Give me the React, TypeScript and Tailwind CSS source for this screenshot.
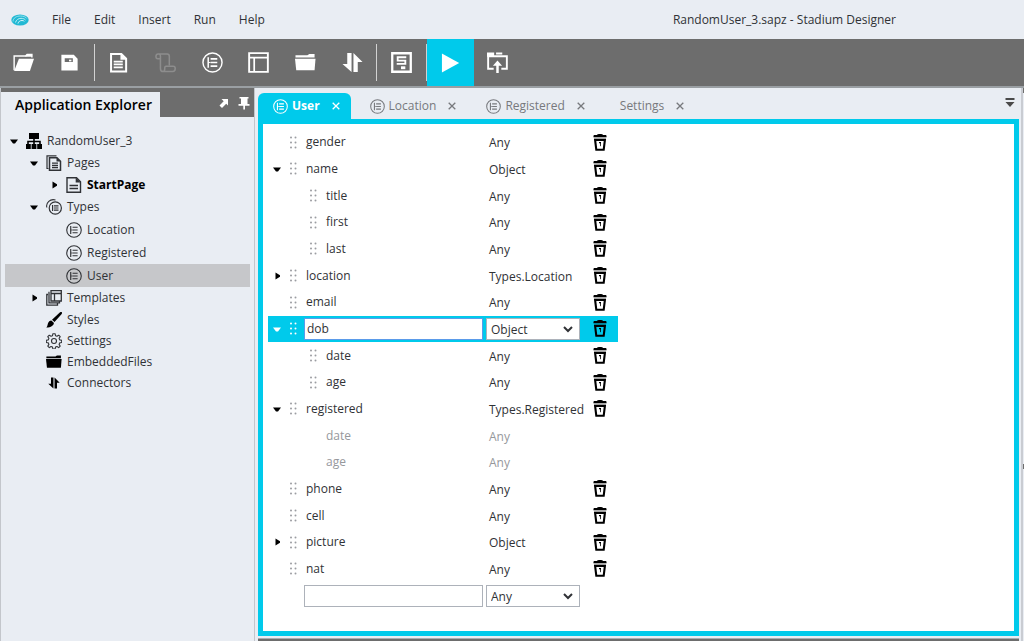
import type { ReactNode } from "react";

type IconProps = { className?: string };

function Svg({ className, box = 22, children }: { className?: string; box?: number; children: ReactNode }) {
  return (
    <svg viewBox={`0 0 ${box} ${box}`} className={className} fill="none" stroke="currentColor" aria-hidden="true">
      {children}
    </svg>
  );
}

function LogoIcon() {
  return (
    <svg viewBox="0 0 18 12" className="h-3 w-[18px]" fill="none" aria-hidden="true">
      <ellipse cx="9" cy="6" rx="8.7" ry="5.6" fill="#22b9d4" />
      <path d="M2 7.5C2 4 5.5 2 9.5 2c3 0 5.500 1 6.300 2.500" stroke="#9fe3ee" strokeWidth=".9" />
      <path d="M4.500 8.500C5 6 7.500 4.300 10 4.300c2 0 3.700.7 4.500 1.700" stroke="#bdeef5" strokeWidth="1" />
      <path d="M7 9.500C7.500 7.500 9 6.500 11 6.500c1.200 0 1.800.3 2.300.9" stroke="#d6f5fa" strokeWidth="1" />
    </svg>
  );
}

function OpenIcon({ className }: IconProps) {
  return (
    <Svg className={className}>
      <path d="M1.200 19V4.200h12.100l1.500-1.700h5v3.200" strokeWidth="1.500" />
      <path d="M13.500 3h6.500v2h-7z" fill="currentColor" stroke="none" />
      <path d="M6.200 7H22l-4.300 13H1.200z" fill="currentColor" stroke="none" />
    </Svg>
  );
}

function SaveIcon({ className }: IconProps) {
  return (
    <Svg className={className}>
      <path fillRule="evenodd" d="M2.500 3h13l4 4v12.500h-17zM6 6.500v4h8.500v-4z" fill="currentColor" stroke="none" />
      <path d="M10.500 8h2.500v1.800h-2.500z" fill="currentColor" stroke="none" />
    </Svg>
  );
}

function PageIcon({ className }: IconProps) {
  return (
    <Svg className={className}>
      <path d="M3.200 2h10.800l5 5v13.500H3.200z" strokeWidth="2.100" />
      <path d="M13 1l7 7h-7z" fill="currentColor" stroke="none" />
      <path d="M6 10h9.500M6 13h9.500M6 16h9.500" strokeWidth="1.800" />
    </Svg>
  );
}

function ScriptIcon({ className }: IconProps) {
  return (
    <Svg className={className}>
      <path d="M5.500 7H2.800C1.500 7 1 6 1 4.700S1.800 2 3.300 2h9.500c1.500 0 2.200 1 2.200 2.500v9.500M5.700 7V4.200c0-1.200-.8-2.200-2-2.200M5.700 7v10.500c0 2 1 3 2.800 3h10c1.700 0 2.700-1.300 2.700-3.200 0-1.300-.8-2.300-2.200-2.300h-7.500c-1.300 0-1.300 1-1.300 2.200 0 2-.6 3.300-1.700 3.300" strokeWidth="1.600" />
    </Svg>
  );
}

function TypeIcon({ className }: IconProps) {
  return (
    <Svg className={className}>
      <circle cx="11" cy="11" r="10" strokeWidth="1.500" />
      <path d="M6.500 5.500v11M9 7.200h7M9 11h7M9 14.800h7" strokeWidth="1.600" />
      <path d="M6.500 11H9" strokeWidth="1" />
    </Svg>
  );
}

function TemplateIcon({ className }: IconProps) {
  return (
    <Svg className={className}>
      <path d="M1.200 1.200h19.600v19.600H1.200z" strokeWidth="2" />
      <path d="M1 6h20M6.500 6v15" strokeWidth="1.800" />
    </Svg>
  );
}

function FolderIcon({ className }: IconProps) {
  return (
    <Svg className={className}>
      <path d="M0 7h21.500l-1 12H1.300z" fill="currentColor" stroke="none" />
      <path d="M.5 3.500h12.500l2-1.500h5.500v3.800H.5z" fill="currentColor" stroke="none" />
    </Svg>
  );
}

function ConnectorIcon({ className }: IconProps) {
  return (
    <Svg className={className}>
      <path d="M5.500 1H10v20L.5 12.500h5z" fill="currentColor" stroke="none" />
      <path d="M12 1l9.500 9.500H16.500V21H12z" fill="currentColor" stroke="none" />
    </Svg>
  );
}

function FormIcon({ className }: IconProps) {
  return (
    <Svg className={className}>
      <path d="M1.300 1.300h19.400v19.400H1.300z" strokeWidth="2.400" />
      <path d="M6 5.500h10M6 9h10M6 12.500h10M7 5.500V9M15 9v3.500" strokeWidth="1.900" />
      <path d="M10.500 15h4.500v3h-4.500z" fill="currentColor" stroke="none" />
    </Svg>
  );
}

function DeployIcon({ className }: IconProps) {
  return (
    <Svg className={className}>
      <path d="M7 17.500H1.200V4.500h19.600v13H15" strokeWidth="2" />
      <path d="M0 .5h7.500V5H0zM9.500.5H16v2H9.500z" fill="currentColor" stroke="none" />
      <path d="M11 9l4.800 5.500h-3.500V22H9.700v-7.500H6.200z" fill="currentColor" stroke="none" />
    </Svg>
  );
}

function PlayIcon({ className }: IconProps) {
  return (
    <Svg className={className}>
      <path d="M1 .5l19 10.500L1 21.500z" fill="currentColor" stroke="none" />
    </Svg>
  );
}

function SitemapIcon({ className }: IconProps) {
  return (
    <Svg className={className} box={16}>
      <path d="M3 0h10v6H3zM0 11h4.800v5H0zM5.600 11h4.800v5H5.600zM11.200 11H16v5h-4.800z" fill="currentColor" stroke="none" />
      <path d="M8 5v6M2 11.500V8.500h12v3" strokeWidth="1.600" />
    </Svg>
  );
}

function PagesIcon({ className }: IconProps) {
  return (
    <Svg className={className} box={16}>
      <path d="M2.500 13.500H1V.8h9.500" strokeWidth="1.200" />
      <path d="M3.500 2.800h7.500l3.500 3.500v9H3.500z" strokeWidth="1.500" />
      <path d="M10.500 2.500v4h4z" fill="currentColor" stroke="none" />
      <path d="M6 8.200h6M6 10.300h6M6 12.500h6" strokeWidth="1.300" />
    </Svg>
  );
}

function StartPageIcon({ className }: IconProps) {
  return (
    <Svg className={className} box={16}>
      <path d="M1 .7h9.500l4 4v10.600H1z" strokeWidth="1.400" />
      <path d="M9.700.5v5h5z" fill="currentColor" stroke="none" />
      <path d="M3.500 8.500h8.500M3.500 11.500h8.500" strokeWidth="1.600" />
    </Svg>
  );
}

function TypesIcon({ className }: IconProps) {
  return (
    <Svg className={className} box={16}>
      <path d="M.8 8.500C-.3 3.500 4.200-.5 9.500 1" strokeWidth="1.100" />
      <circle cx="9.300" cy="9" r="6.100" strokeWidth="1.200" />
      <path d="M6.600 6v6M8 6.800h4.500M8 9h4.500M8 11.200h4.500" strokeWidth="1.200" />
    </Svg>
  );
}

function TemplatesIcon({ className }: IconProps) {
  return (
    <Svg className={className} box={16}>
      <path d="M5 .7h10.300V11H5zM5 3.500h10.300M8.500 3.500V11M3.500 2.500H3v10.300h10.500V11.500M2 4.500H.8v10.700h10.700v-2" strokeWidth="1.300" />
    </Svg>
  );
}

function BrushIcon({ className }: IconProps) {
  return (
    <Svg className={className} box={16}>
      <path d="M15.800.2c.5.5.2 1.400-.3 2L8.500 10 6 7.800 13.500.7c.7-.7 1.700-1 2.300-.5z" fill="currentColor" stroke="none" />
      <path d="M5.300 8.500l2.500 2.200c.5 2.500-2.800 4.800-7.500 4.900C1.700 14 1.500 12.800 2 11.300c.6-1.700 1.800-2.700 3.300-2.800z" fill="currentColor" stroke="none" />
    </Svg>
  );
}

function GearIcon({ className }: IconProps) {
  return (
    <Svg className={className} box={16}>
      <path d="M6.900.7h2.200l.4 2 1.500.6 1.700-1.100 1.500 1.500-1.100 1.700.6 1.500 2 .4v2.200l-2 .4-.6 1.500 1.100 1.700-1.500 1.500-1.700-1.100-1.500.6-.4 2H6.900l-.4-2-1.500-.6-1.700 1.100-1.500-1.500 1.100-1.700-.6-1.500-2-.4V7.300l2-.4.6-1.500-1.100-1.700 1.500-1.500L5 3.300l1.500-.6z" strokeWidth="1.100" strokeLinejoin="round" />
      <circle cx="8" cy="8" r="2.500" strokeWidth="1.100" />
    </Svg>
  );
}

function TrashIcon({ className }: IconProps) {
  return (
    <svg viewBox="0 0 14 17" className={className} fill="none" stroke="currentColor" aria-hidden="true">
      <path d="M4 1C4 .2 5.500 0 7 0s3 .2 3 1h3.200l.5 2.300H.3L.8 1z" fill="currentColor" stroke="none" />
      <path d="M1 4.300h12" strokeWidth="1" strokeOpacity=".45" />
      <path d="M2.100 6h9.800l-1.200 9.800H3.300z" strokeWidth="2.100" />
      <path d="M6 8h2v3.800l-.8.7V9.200H6z" fill="currentColor" stroke="none" />
    </svg>
  );
}

function Grip({ className }: IconProps) {
  return (
    <svg viewBox="0 0 8 13" className={`h-[13px] w-2 shrink-0 ${className}`} fill="currentColor" aria-hidden="true">
      {[1.500, 6.500, 11.500].map((y) => (
        <g key={y}>
          <circle cx="2" cy={y} r="1" />
          <circle cx="6.500" cy={y} r="1" />
        </g>
      ))}
    </svg>
  );
}

function Arrow({ open }: { open: boolean }) {
  return (
    <svg viewBox="0 0 8 8" className="size-2 shrink-0" fill="currentColor" aria-hidden="true">
      <path d={open ? "M0 2.500h8L5 6.500H3z" : "M2.500 .5v7L7 4.700V3.300z"} />
    </svg>
  );
}

function ToolButton({ label, active, faded, children }: { label: string; active?: boolean; faded?: boolean; children: ReactNode }) {
  const tone = active ? "w-[47px] bg-[#00caeb] text-white" : faded ? "text-[#8d8d8d]" : "text-white";
  return (
    <button type="button" aria-label={label} className={`flex h-[47px] items-center justify-center ${tone}`}>
      {children}
    </button>
  );
}

function Divider() {
  return <span className="mt-[5px] h-[37px] w-px shrink-0 bg-[#d2d2d2]" />;
}

type TreeItem = {
  label: string;
  icon: ReactNode;
  height: string;
  indent: string;
  arrow?: "open" | "closed";
  bold?: boolean;
  selected?: boolean;
};

const treeIcon = "size-4 shrink-0";

const tree: TreeItem[] = [
  { label: "RandomUser_3", icon: <SitemapIcon className={`${treeIcon} text-black`} />, height: "h-[22px]", indent: "pl-[5px]", arrow: "open" },
  { label: "Pages", icon: <PagesIcon className={treeIcon} />, height: "h-[22px]", indent: "pl-[25px]", arrow: "open" },
  { label: "StartPage", icon: <StartPageIcon className={treeIcon} />, height: "h-[22px]", indent: "pl-[45px]", arrow: "closed", bold: true },
  { label: "Types", icon: <TypesIcon className={treeIcon} />, height: "h-[22px]", indent: "pl-[25px]", arrow: "open" },
  { label: "Location", icon: <TypeIcon className={treeIcon} />, height: "h-[23px]", indent: "pl-[45px]" },
  { label: "Registered", icon: <TypeIcon className={treeIcon} />, height: "h-[23px]", indent: "pl-[45px]" },
  { label: "User", icon: <TypeIcon className={treeIcon} />, height: "h-[23px]", indent: "pl-[45px]", selected: true },
  { label: "Templates", icon: <TemplatesIcon className={treeIcon} />, height: "h-[22px]", indent: "pl-[25px]", arrow: "closed" },
  { label: "Styles", icon: <BrushIcon className={`${treeIcon} text-black`} />, height: "h-[21px]", indent: "pl-[25px]" },
  { label: "Settings", icon: <GearIcon className={treeIcon} />, height: "h-[21px]", indent: "pl-[25px]" },
  { label: "EmbeddedFiles", icon: <FolderIcon className={`${treeIcon} text-black`} />, height: "h-[21px]", indent: "pl-[25px]" },
  { label: "Connectors", icon: <ConnectorIcon className="mx-0.5 size-3 shrink-0 text-black" />, height: "h-[21px]", indent: "pl-[25px]" },
];

function Explorer() {
  return (
    <aside className="flex w-[255px] shrink-0 flex-col border-x border-[#c3c6cb]">
      <div className="flex h-[29px] bg-[#6d6d6d] text-white">
        <h2 className="mt-1 flex w-[159px] items-center bg-[#e9edf3] pl-3.5 text-sm font-semibold text-black">
          Application Explorer
        </h2>
        <div className="ml-auto flex items-center gap-2 pr-1">
          <button type="button" aria-label="Float panel">
            <svg viewBox="0 0 12 12" className="size-3" aria-hidden="true">
              <path d="M3.500 2H10v6.500L8.200 6.700 4 11 1.500 8.500l4.200-4.200z" fill="currentColor" />
            </svg>
          </button>
          <button type="button" aria-label="Pin panel">
            <svg viewBox="0 0 12 14" className="h-3.5 w-3" aria-hidden="true">
              <path d="M1.500 1h9v1.500H9.500v5.500h2v1.800H7V13.500H5.300V9.800H.5V8H3V2.500H1.500z" fill="currentColor" />
            </svg>
          </button>
        </div>
      </div>
      <ul className="flex flex-col px-1 pt-[13px] text-xs text-[#303236]">
        {tree.map((item) => (
          <li key={item.label} className={`flex items-center ${item.height} ${item.indent} ${item.selected ? "bg-[#c6c7ca]" : ""}`}>
            <span className="mr-2 flex w-2 text-black">{item.arrow && <Arrow open={item.arrow === "open"} />}</span>
            {item.icon}
            <span className={item.bold ? "pl-[5px] font-bold text-black" : "pl-[5px]"}>{item.label}</span>
          </li>
        ))}
      </ul>
    </aside>
  );
}

const tabs = [
  { label: "User", icon: true, active: true },
  { label: "Location", icon: true, active: false },
  { label: "Registered", icon: true, active: false },
  { label: "Settings", icon: false, active: false },
];

function Tabs() {
  return (
    <div className="flex h-[31px] items-end">
      <div role="tablist" className="flex items-end gap-1">
        {tabs.map((tab) => (
          <div
            key={tab.label}
            className={`flex h-[26px] items-center rounded-t-md pr-[11px] text-xs ${tab.icon ? "pl-[15px]" : "pl-5"} ${tab.active ? "bg-[#00caeb] font-bold text-white" : "text-[#77797d]"}`}
          >
            <button type="button" role="tab" aria-selected={tab.active} className="flex items-center gap-1">
              {tab.icon && <TypeIcon className="size-[15px]" />}
              {tab.label}
            </button>
            <button type="button" aria-label={`Close ${tab.label}`} className="ml-3">
              <svg viewBox="0 0 8 8" className="size-2" stroke="currentColor" strokeWidth="1.300" aria-hidden="true">
                <path d="M.7.7l6.600 6.600M7.300.7L.7 7.300" />
              </svg>
            </button>
          </div>
        ))}
      </div>
      <button type="button" aria-label="Open tab list" className="mr-1 mb-3 ml-auto text-[#4a4a4a]">
        <svg viewBox="0 0 10 9" className="h-[9px] w-2.5" fill="currentColor" aria-hidden="true">
          <path d="M.5 0h9v2h-9zM.5 4h9L5 9z" />
        </svg>
      </button>
    </div>
  );
}

type Field = {
  name: string;
  type: string;
  child?: boolean;
  arrow?: "open" | "closed";
  inherited?: boolean;
  editing?: boolean;
};

const fields: Field[] = [
  { name: "gender", type: "Any" },
  { name: "name", type: "Object", arrow: "open" },
  { name: "title", type: "Any", child: true },
  { name: "first", type: "Any", child: true },
  { name: "last", type: "Any", child: true },
  { name: "location", type: "Types.Location", arrow: "closed" },
  { name: "email", type: "Any" },
  { name: "dob", type: "Object", arrow: "open", editing: true },
  { name: "date", type: "Any", child: true },
  { name: "age", type: "Any", child: true },
  { name: "registered", type: "Types.Registered", arrow: "open" },
  { name: "date", type: "Any", child: true, inherited: true },
  { name: "age", type: "Any", child: true, inherited: true },
  { name: "phone", type: "Any" },
  { name: "cell", type: "Any" },
  { name: "picture", type: "Object", arrow: "closed" },
  { name: "nat", type: "Any" },
];

function TypeSelect({ label, value }: { label: string; value: string }) {
  return (
    <div className="relative">
      <select
        aria-label={label}
        defaultValue={value}
        className="block h-[22px] w-[94px] appearance-none border border-[#adb2ba] bg-white pt-0.5 pl-1 text-xs text-[#303236]"
      >
        <option>Any</option>
        <option>Object</option>
        <option>Types.Location</option>
        <option>Types.Registered</option>
      </select>
      <svg viewBox="0 0 10 7" className="pointer-events-none absolute top-2 left-[77px] h-[7px] w-2.5" fill="none" stroke="#303236" strokeWidth="2" aria-hidden="true">
        <path d="M1 1l4 4 4-4" />
      </svg>
    </div>
  );
}

function FieldRow({ field }: { field: Field }) {
  return (
    <tr className={`h-[26px] ${field.editing ? "bg-[#00caeb]" : field.inherited ? "text-[#96989c]" : ""}`}>
      <td className="p-0">
        <div className="flex items-center">
          <span className={`ml-[5px] flex w-2 ${field.editing ? "text-white" : "text-black"}`}>
            {field.arrow && <Arrow open={field.arrow === "open"} />}
          </span>
          <Grip
            className={`${field.child ? "ml-7" : "ml-2"} ${field.inherited ? "invisible" : field.editing ? "text-white" : "text-[#9b9da1]"}`}
          />
          {field.editing ? (
            <input
              aria-label="Field name"
              defaultValue={field.name}
              className="ml-[7px] h-[22px] w-[179px] border border-[#5b9bea] bg-white px-0.5 text-xs text-[#303236] outline-none"
            />
          ) : (
            <span className="pl-[9px]">{field.name}</span>
          )}
        </div>
      </td>
      <td className="p-0">
        {field.editing ? <TypeSelect label="Field type" value={field.type} /> : <span className="block pt-0.5 pl-[3px]">{field.type}</span>}
      </td>
      <td className="p-0">
        {!field.inherited && (
          <button type="button" aria-label={`Delete ${field.name}`} className="ml-[11px] block text-black">
            <TrashIcon className="h-[17px] w-3.5" />
          </button>
        )}
      </td>
    </tr>
  );
}

function Editor() {
  return (
    <main className="flex min-w-0 flex-1 flex-col pl-[3px]">
      <Tabs />
      <section className="flex-1 border-5 border-[#00caeb] bg-white pt-[5px] pl-[5px]">
        <table className="h-[480px] w-[350px] table-fixed border-collapse text-xs text-[#303236]">
          <colgroup>
            <col className="w-[218px]" />
            <col className="w-24" />
            <col />
          </colgroup>
          <tbody>
            {fields.map((field, i) => (
              <FieldRow key={i} field={field} />
            ))}
            <tr className="h-[26px]">
              <td className="p-0">
                <input aria-label="New field name" className="ml-9 block h-[22px] w-[179px] border border-[#adb2ba] bg-white px-0.5 outline-none" />
              </td>
              <td className="p-0">
                <TypeSelect label="New field type" value="Any" />
              </td>
              <td className="p-0" />
            </tr>
          </tbody>
        </table>
      </section>
      <div className="mt-0.5 h-[3px] border-t border-[#a9adb2] bg-[#6d6d6d]" />
    </main>
  );
}

export default function App() {
  const tool = "size-[21px]";
  return (
    <div className="flex min-h-screen flex-col bg-[#e9edf3] font-['Open_Sans','Noto_Sans',sans-serif]">
      <header className="flex h-10 items-center text-xs text-[#303236]">
        <div className="pr-[23px] pl-[11px]">
          <LogoIcon />
        </div>
        <nav className="flex gap-[23px]">
          {["File", "Edit", "Insert", "Run", "Help"].map((item) => (
            <button key={item} type="button">
              {item}
            </button>
          ))}
        </nav>
        <h1 className="mr-32 ml-auto">RandomUser_3.sapz - Stadium Designer</h1>
      </header>
      <div role="toolbar" aria-label="Main" className="-mt-px flex h-[49px] border-b-2 border-[#9a9fa3] bg-[#6d6d6d]">
        <div className="mr-0.5 grid w-[92px] grid-cols-2">
          <ToolButton label="Open"><OpenIcon className={tool} /></ToolButton>
          <ToolButton label="Save"><SaveIcon className={tool} /></ToolButton>
        </div>
        <Divider />
        <div className="grid w-[281px] grid-cols-6">
          <ToolButton label="New page"><PageIcon className={tool} /></ToolButton>
          <ToolButton label="New script" faded><ScriptIcon className={tool} /></ToolButton>
          <ToolButton label="New type"><TypeIcon className={tool} /></ToolButton>
          <ToolButton label="New template"><TemplateIcon className={tool} /></ToolButton>
          <ToolButton label="Embedded files"><FolderIcon className={tool} /></ToolButton>
          <ToolButton label="Connectors"><ConnectorIcon className={tool} /></ToolButton>
        </div>
        <Divider />
        <div className="grid w-[49px] grid-cols-1">
          <ToolButton label="Properties"><FormIcon className={tool} /></ToolButton>
        </div>
        <Divider />
        <ToolButton label="Run" active><PlayIcon className="size-5" /></ToolButton>
        <div className="grid w-[47px] grid-cols-1">
          <ToolButton label="Deploy"><DeployIcon className={tool} /></ToolButton>
        </div>
      </div>
      <div className="flex flex-1">
        <Explorer />
        <Editor />
        <div className="ml-0.5 flex w-[3px] flex-col border-l-2 border-[#c9ccd2]">
          <span className="h-[5px] bg-[#6d6d6d]" />
          <span className="mt-[371px] h-[5px] bg-[#6d6d6d]" />
        </div>
      </div>
    </div>
  );
}
